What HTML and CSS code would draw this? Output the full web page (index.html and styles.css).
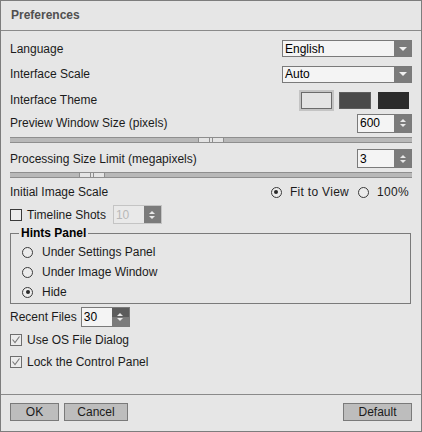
FILE: index.html
```html
<!DOCTYPE html>
<html lang="en">
<head>
    <meta charset="UTF-8">
    <title>Preferences</title>
    <link rel="stylesheet" href="styles.css">
</head>
<body>
    <!-- Dialog -->
    <div class="dialog">
        <div class="title-bar">Preferences</div>

        <div class="content">
            <div class="row row-lang">
                <span>Language</span>
                <div class="select"><span class="select-value">English</span><span class="select-arrow"></span></div>
            </div>
            <div class="row row-scale">
                <span>Interface Scale</span>
                <div class="select"><span class="select-value">Auto</span><span class="select-arrow"></span></div>
            </div>
            <div class="row row-theme">
                <span>Interface Theme</span>
                <div class="swatches">
                    <span class="swatch swatch-light selected"></span>
                    <span class="swatch swatch-gray"></span>
                    <span class="swatch swatch-dark"></span>
                </div>
            </div>
            <div class="row row-preview">
                <span>Preview Window Size (pixels)</span>
                <div class="spin"><span class="spin-value">600</span><span class="spin-arrows"><i class="up"></i><i class="down"></i></span></div>
            </div>
            <div class="slider slider-preview"><span class="thumb" style="left: 188px;"></span></div>
            <div class="row row-process">
                <span>Processing Size Limit (megapixels)</span>
                <div class="spin"><span class="spin-value">3</span><span class="spin-arrows"><i class="up"></i><i class="down"></i></span></div>
            </div>
            <div class="slider slider-process"><span class="thumb" style="left: 69px;"></span></div>
            <div class="row row-initial">
                <span>Initial Image Scale</span>
                <div class="radio-group">
                    <span class="radio checked"></span><span class="radio-label">Fit to View</span>
                    <span class="radio"></span><span class="radio-label">100%</span>
                </div>
            </div>
            <div class="row-left row-timeline">
                <span class="checkbox"></span>
                <span class="check-label">Timeline Shots</span>
                <div class="spin spin-small disabled"><span class="spin-value">10</span><span class="spin-arrows"><i class="up"></i><i class="down"></i></span></div>
            </div>

            <fieldset class="group">
                <legend>Hints Panel</legend>
                <div class="option"><span class="radio"></span>Under Settings Panel</div>
                <div class="option"><span class="radio"></span>Under Image Window</div>
                <div class="option"><span class="radio checked"></span>Hide</div>
            </fieldset>

            <div class="row-left row-recent">
                <span>Recent Files</span>
                <div class="spin spin-small recent"><span class="spin-value">30</span><span class="spin-arrows"><i class="up"></i><i class="down"></i></span></div>
            </div>
            <div class="row-left row-check">
                <span class="checkbox checked"><svg width="10" height="10" viewBox="0 0 10 10"><path d="M1.5 4.5 L4 7.5 L8.5 1.5" fill="none" stroke="#7a7a7a" stroke-width="1.1"/></svg></span>
                <span class="check-label">Use OS File Dialog</span>
            </div>
            <div class="row-left row-check">
                <span class="checkbox checked"><svg width="10" height="10" viewBox="0 0 10 10"><path d="M1.5 4.5 L4 7.5 L8.5 1.5" fill="none" stroke="#7a7a7a" stroke-width="1.1"/></svg></span>
                <span class="check-label">Lock the Control Panel</span>
            </div>
        </div>

        <div class="footer">
            <div class="footer-left">
                <button class="btn btn-ok">OK</button>
                <button class="btn btn-cancel">Cancel</button>
            </div>
            <button class="btn btn-default">Default</button>
        </div>
    </div>
</body>
</html>
```

FILE: styles.css
```css
/* Global */
body {
    margin: 0;
    padding: 0;
    font-family: 'Liberation Sans', Arial, sans-serif;
    font-size: 12px;
    color: #1b1b1b;
    background: #e6e6e6;
}

/* Dialog frame */
.dialog {
    width: 422px;
    height: 432px;
    box-sizing: border-box;
    border: 1px solid #7d7d7d;
    background: #e6e6e6;
    display: flex;
    flex-direction: column;
}

.title-bar {
    height: 30px;
    box-sizing: border-box;
    border-bottom: 1px solid #8a8a8a;
    padding-left: 10px;
    line-height: 29px;
    font-weight: bold;
    color: #505050;
}

.content {
    flex: 1;
    padding: 0 9px;
    display: flex;
    flex-direction: column;
}

/* Rows */
.row {
    display: flex;
    align-items: center;
    justify-content: space-between;
}

.row-left {
    display: flex;
    align-items: center;
}

.row-lang { margin-top: 9px; height: 17px; }
.row-scale { margin-top: 8px; height: 18px; }
.row-theme { margin-top: 6px; height: 22px; }
.row-preview { margin-top: 3px; height: 18px; }
.row-process { margin-top: 6px; height: 19px; }
.row-initial { margin-top: 5px; height: 18px; }
.row-timeline { margin-top: 4px; height: 19px; }
.row-recent { margin-top: 3px; height: 20px; }
.row-check { margin-top: 4px; height: 18px; }

/* Dropdowns */
.select {
    width: 130px;
    height: 17px;
    box-sizing: border-box;
    border: 1px solid #7a7a7a;
    background: #f4f4f4;
    display: flex;
    align-items: center;
}

.select-value {
    flex: 1;
    padding-left: 2px;
    color: #000;
}

.select-arrow {
    width: 17px;
    height: 100%;
    background: #7b7b7b;
    display: flex;
    align-items: center;
    justify-content: center;
}

.select-arrow::after {
    content: "";
    border-left: 4px solid transparent;
    border-right: 4px solid transparent;
    border-top: 4px solid #f0f0f0;
}

/* Theme swatches */
.swatches {
    display: flex;
    align-items: center;
    gap: 5px;
    padding-right: 3px;
}

.swatch {
    display: block;
    box-sizing: border-box;
    width: 32px;
    height: 17px;
}

.swatch-light {
    background: #e4e4e4;
}

.swatch-light.selected {
    width: 35px;
    height: 21px;
    border: 2px solid #c4c4c4;
    box-shadow: inset 0 0 0 1px #6b6b6b;
}

.swatch-gray {
    background: #4a4a4a;
    border: 1px solid #5e5e5e;
}

.swatch-dark {
    width: 31px;
    margin-left: 2px;
    background: #2c2c2c;
}

/* Spin boxes */
.spin {
    width: 55px;
    height: 19px;
    box-sizing: border-box;
    border: 1px solid #7a7a7a;
    background: #f4f4f4;
    display: flex;
    align-items: center;
}

.spin-value {
    flex: 1;
    padding-left: 2px;
    color: #000;
}

.spin-arrows {
    width: 17px;
    height: 100%;
    background: #7b7b7b;
    display: flex;
    flex-direction: column;
    align-items: center;
    justify-content: center;
    gap: 2px;
}

.spin-arrows .up {
    border-left: 3px solid transparent;
    border-right: 3px solid transparent;
    border-bottom: 3px solid #e8e8e8;
}

.spin-arrows .down {
    border-left: 3px solid transparent;
    border-right: 3px solid transparent;
    border-top: 3px solid #e8e8e8;
}

.spin-small {
    width: 49px;
}

.spin.disabled {
    height: 19px;
    border-color: #c4c4c4;
    background: #e9e9e9;
    margin-left: 7px;
}

.spin.disabled .spin-value {
    color: #b8b8b8;
}

.spin.recent {
    height: 20px;
    margin-left: 4px;
}

.spin.recent .spin-arrows {
    background: linear-gradient(#5c5c5c 50%, #7b7b7b 50%);
}

/* Sliders */
.slider {
    position: relative;
    height: 6px;
    box-sizing: border-box;
    border-top: 1px solid #8e8e8e;
    border-bottom: 1px solid #8e8e8e;
    background: #b8b8b8;
}

.slider-preview { margin-top: 5px; }
.slider-process { margin-top: 4px; }

.thumb {
    position: absolute;
    top: -1px;
    width: 26px;
    height: 6px;
    box-sizing: border-box;
    border: 1px solid #8e8e8e;
    background: #e4e4e4;
}

.thumb::after {
    content: "";
    position: absolute;
    left: 10px;
    top: 0;
    width: 2px;
    height: 4px;
    border-left: 1px solid #8e8e8e;
    border-right: 1px solid #8e8e8e;
}

/* Radio buttons */
.radio-group {
    display: flex;
    align-items: center;
    padding-right: 3px;
}

.radio {
    display: inline-block;
    position: relative;
    width: 11px;
    height: 11px;
    box-sizing: border-box;
    border: 1px solid #3a3a3a;
    border-radius: 50%;
    background: #ececec;
    flex-shrink: 0;
}

.radio.checked::after {
    content: "";
    position: absolute;
    left: 2.5px;
    top: 2.5px;
    width: 4px;
    height: 4px;
    border-radius: 50%;
    background: #2a2a2a;
}

.radio-label {
    margin-left: 8px;
    margin-right: 9px;
    letter-spacing: 0.3px;
}

.radio-label:last-child {
    margin-right: 0;
}

/* Checkboxes */
.checkbox {
    width: 12px;
    height: 12px;
    box-sizing: border-box;
    border: 1px solid #3a3a3a;
    background: #ececec;
    display: flex;
    align-items: center;
    justify-content: center;
    flex-shrink: 0;
}

.checkbox.checked {
    border-color: #6e6e6e;
}

.check-label {
    margin-left: 5px;
}

/* Hints Panel group */
.group {
    margin: 2px 0 0 0;
    padding: 2px 0 0 10px;
    border: 1px solid #7a7a7a;
    width: 401px;
    box-sizing: border-box;
    height: 78px;
}

.group legend {
    font-weight: bold;
    color: #000;
    padding: 0 2px;
    margin-left: -2px;
    line-height: 14px;
}

.option {
    height: 20px;
    display: flex;
    align-items: center;
    gap: 9px;
    padding-left: 1px;
}

/* Footer */
.footer {
    height: 37px;
    box-sizing: border-box;
    border-top: 1px solid #8a8a8a;
    padding: 8px 9px 0 9px;
    display: flex;
    justify-content: space-between;
    align-items: flex-start;
}

.footer-left {
    display: flex;
    gap: 5px;
}

.btn {
    height: 18px;
    padding: 0;
    border: 1px solid #7a7a7a;
    background: #bdbdbd;
    font-family: 'Liberation Sans', Arial, sans-serif;
    font-size: 12px;
    color: #1b1b1b;
    cursor: pointer;
}

.btn-ok { width: 49px; }
.btn-cancel { width: 64px; }
.btn-default { width: 69px; }
```
